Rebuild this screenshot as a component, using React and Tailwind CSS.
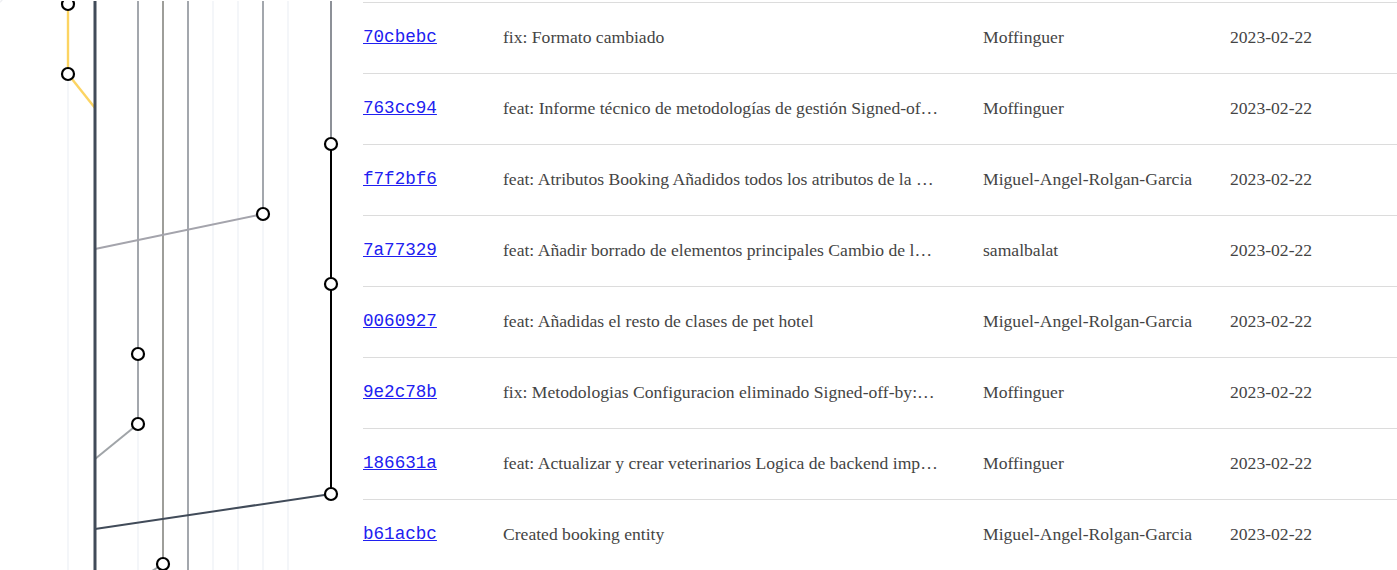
import React from 'react';

const commits = [
  { hash: '70cbebc', message: 'fix: Formato cambiado', author: 'Moffinguer', date: '2023-02-22' },
  { hash: '763cc94', message: 'feat: Informe técnico de metodologías de gestión Signed-off-by: Moffinguer', author: 'Moffinguer', date: '2023-02-22' },
  { hash: 'f7f2bf6', message: 'feat: Atributos Booking Añadidos todos los atributos de la entidad', author: 'Miguel-Angel-Rolgan-Garcia', date: '2023-02-22' },
  { hash: '7a77329', message: 'feat: Añadir borrado de elementos principales Cambio de las entidades', author: 'samalbalat', date: '2023-02-22' },
  { hash: '0060927', message: 'feat: Añadidas el resto de clases de pet hotel', author: 'Miguel-Angel-Rolgan-Garcia', date: '2023-02-22' },
  { hash: '9e2c78b', message: 'fix: Metodologias Configuracion eliminado Signed-off-by: Moffinguer', author: 'Moffinguer', date: '2023-02-22' },
  { hash: '186631a', message: 'feat: Actualizar y crear veterinarios Logica de backend implementada', author: 'Moffinguer', date: '2023-02-22' },
  { hash: 'b61acbc', message: 'Created booking entity', author: 'Miguel-Angel-Rolgan-Garcia', date: '2023-02-22' },
];

const guides = [67, 137, 162, 187, 212, 237, 262, 287];

function Node({ x, y }) {
  return <circle cx={x} cy={y} r="6" fill="#fff" stroke="#000" strokeWidth="2.2" />;
}

function CommitGraph() {
  return (
    <svg width="345" height="570" viewBox="0 0 345 570" className="block shrink-0">
      {guides.map((x) => (
        <line key={x} x1={x} y1="0" x2={x} y2="570" stroke="#f1f3f7" strokeWidth="1.5" />
      ))}

      {/* yellow branch */}
      <line x1="67" y1="0" x2="67" y2="73" stroke="#fcd462" strokeWidth="2.4" />
      <line x1="67" y1="73" x2="94" y2="107" stroke="#fcd462" strokeWidth="2.4" />

      {/* grey branches */}
      <line x1="137" y1="0" x2="137" y2="423" stroke="#a3a7ad" strokeWidth="2" />
      <line x1="137" y1="423" x2="94" y2="458" stroke="#a0a4a8" strokeWidth="2" />
      <line x1="162" y1="0" x2="162" y2="563" stroke="#9e9e9a" strokeWidth="2" />
      <line x1="162" y1="563" x2="148" y2="572" stroke="#a0a4a8" strokeWidth="2" />
      <line x1="187" y1="0" x2="187" y2="570" stroke="#a3a7ad" strokeWidth="2" />
      <line x1="262" y1="0" x2="262" y2="213" stroke="#a3a7ad" strokeWidth="2" />
      <line x1="262" y1="213" x2="94" y2="248" stroke="#a4a4ac" strokeWidth="2" />
      <line x1="330" y1="0" x2="330" y2="143" stroke="#8d9198" strokeWidth="2" />

      {/* black branch */}
      <line x1="330" y1="143" x2="330" y2="493" stroke="#000" strokeWidth="2" />
      <line x1="330" y1="493" x2="94" y2="528" stroke="#414b59" strokeWidth="2" />

      {/* main */}
      <line x1="94" y1="0" x2="94" y2="570" stroke="#414b59" strokeWidth="3" />

      <Node x={67} y={3} />
      <Node x={67} y={73} />
      <Node x={330} y={143} />
      <Node x={262} y={213} />
      <Node x={330} y={283} />
      <Node x={137} y={353} />
      <Node x={137} y={423} />
      <Node x={330} y={493} />
      <Node x={162} y={563} />
    </svg>
  );
}

function CommitRow({ commit }) {
  return (
    <div className="grid grid-cols-[140px_480px_247px_1fr] items-center h-[71px] pb-[2px] border-t border-[#dcdcdc] text-[17.6px] text-[#444] font-['Liberation_Serif',serif]">
      <a href="#" className="font-['Liberation_Mono',monospace] text-[#2020f0] underline pt-[1px]">
        {commit.hash}
      </a>
      <span className="truncate pr-[44px]">{commit.message}</span>
      <span className="truncate">{commit.author}</span>
      <span>{commit.date}</span>
    </div>
  );
}

export default function App() {
  return (
    <div className="w-[1397px] h-[570px] overflow-hidden bg-white">
      <div className="-mt-1 -ml-1 border-t border-l border-[#eceef1] rounded-tl-2xl flex pt-1 pl-1">
        <CommitGraph />
        <div className="flex-1 ml-[17px] pt-[1px]">
          {commits.map((c) => (
            <CommitRow key={c.hash} commit={c} />
          ))}
        </div>
      </div>
    </div>
  );
}
